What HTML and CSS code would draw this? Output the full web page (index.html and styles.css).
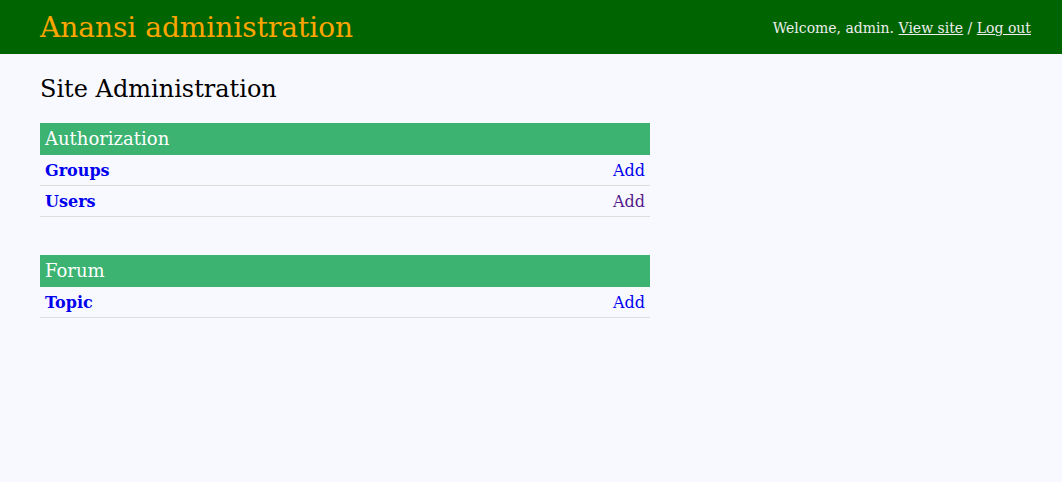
FILE: index.html
```html
<!DOCTYPE html>
<html>
<head>
<meta charset="utf-8">
<link rel="stylesheet" href="styles.css">
</head>
<body>
<header class="topbar">
  <div class="brand">Anansi administration</div>
  <div class="usertools">Welcome, admin. <a href="#site">View site</a> / <a href="#logout">Log out</a></div>
</header>
<main class="content">
  <h1 class="page-title">Site Administration</h1>
  <table class="module">
    <caption>Authorization</caption>
    <tr><th><a href="#groups">Groups</a></th><td><a href="#groups-add">Add</a></td></tr>
    <tr><th><a href="#users">Users</a></th><td><a class="visited" href="#users-add">Add</a></td></tr>
  </table>
  <table class="module">
    <caption>Forum</caption>
    <tr><th><a href="#topic">Topic</a></th><td><a href="#topic-add">Add</a></td></tr>
  </table>
</main>
</body>
</html>
```
FILE: styles.css
```css
html, body {
  margin: 0;
  padding: 0;
  background: #f8f8ff;
  font-family: "DejaVu Serif", serif;
  height: 100%;
}
.topbar {
  height: 54px;
  background: #006400;
  display: flex;
  align-items: center;
  justify-content: space-between;
  padding: 0 31px 0 40px;
}
.brand {
  color: #ffa500;
  font-size: 28px;
}
.usertools {
  color: #eeeeee;
  font-size: 14px;
  padding-top: 2px;
}
.usertools a {
  color: #eeeeee;
}
.content {
  padding: 0 40px;
}
.page-title {
  font-size: 24px;
  font-weight: normal;
  margin: 21px 0 20px;
  color: #000;
}
.module {
  width: 610px;
  border-collapse: collapse;
  margin: 0 0 38px;
}
.module caption {
  background: #3cb371;
  color: #ffffff;
  font-size: 18px;
  text-align: left;
  line-height: 32px;
  padding: 0 5px;
}
.module th, .module td {
  height: 28px;
  padding: 2px 5px 0;
  border-bottom: 1px solid #dddddd;
  font-size: 16px;
  line-height: 28px;
  vertical-align: middle;
}
.module th {
  text-align: left;
  font-weight: bold;
}
.module td {
  text-align: right;
}
.module a {
  color: #0000ee;
  text-decoration: none;
}
.module a.visited {
  color: #551a8b;
}
```
